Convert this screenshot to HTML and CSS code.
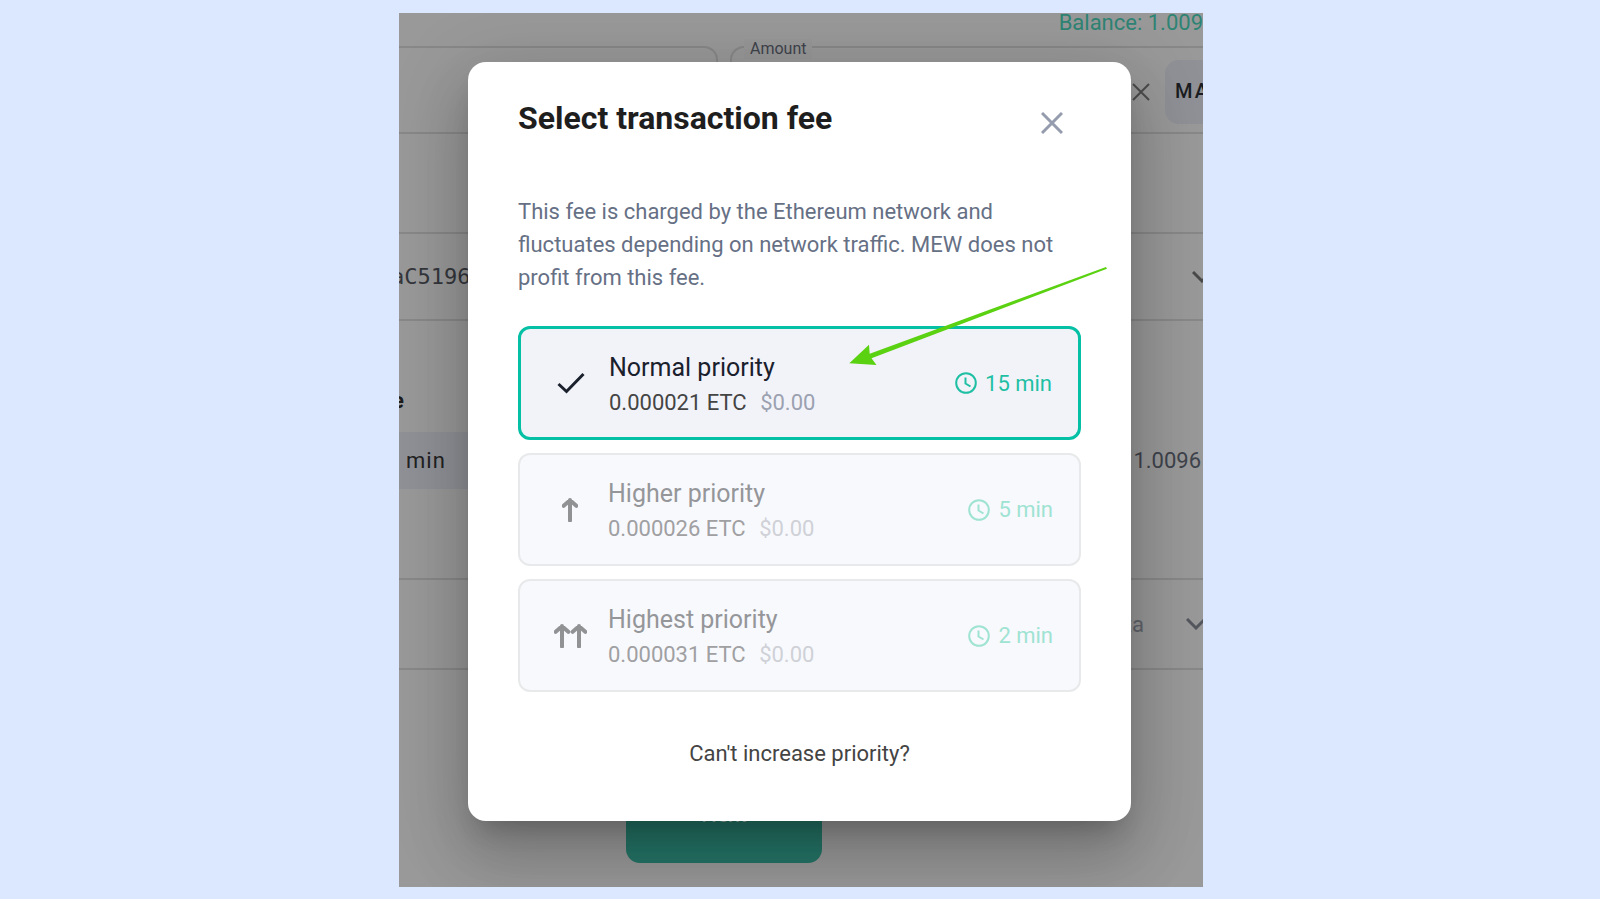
FILE: index.html
```html
<!DOCTYPE html>
<html lang="en">
<head>
<meta charset="utf-8">
<title>Select transaction fee</title>
<link rel="stylesheet" href="styles.css">
</head>
<body>
<main class="frame">
  <div class="page">
    <p class="balance">Balance: 1.009</p>
    <div class="fields">
      <div class="token"></div>
      <fieldset class="amount">
        <legend class="amount-label">Amount</legend>
        <button class="clear" type="button" aria-label="Clear amount">
          <svg class="icon-clear" viewBox="0 0 20 20"><path d="M2 2 18 18M18 2 2 18"/></svg>
        </button>
        <button class="max" type="button">MA</button>
      </fieldset>
    </div>
    <div class="row address">
      <span class="hash">aC5196</span>
      <svg class="chevron chevron-dark" viewBox="0 0 20 12"><path d="M1 1 10 10 19 1"/></svg>
    </div>
    <section class="fee">
      <h2 class="fee-title">e</h2>
      <div class="fee-row">
        <button class="fee-chip" type="button">min</button>
        <span class="fee-total">1.0096</span>
      </div>
    </section>
    <div class="row advanced">
      <span class="advanced-label">data</span>
      <svg class="chevron" viewBox="0 0 20 12"><path d="M1 1 10 10 19 1"/></svg>
    </div>
    <button class="next" type="button">Next</button>
  </div>

  <div class="modal" role="dialog" aria-labelledby="modal-title">
    <header class="modal-head">
      <h1 class="modal-title" id="modal-title">Select transaction fee</h1>
      <button class="close" type="button" aria-label="Close">
        <svg class="icon-close" viewBox="0 0 22 22"><path d="M1 1 21 21M21 1 1 21"/></svg>
      </button>
    </header>
    <p class="about">This fee is charged by the Ethereum network and fluctuates depending on network traffic. MEW does not profit from this fee.</p>
    <div class="options">
      <button class="option selected" type="button">
        <span class="mark"><svg class="icon-check" viewBox="0 0 28 22"><path d="M1.5 12 9.500 19.500 26.500 2"/></svg></span>
        <span class="detail">
          <span class="name">Normal priority</span>
          <span class="cost">0.000021 ETC <span class="usd">$0.00</span></span>
        </span>
        <span class="time"><svg class="clock" viewBox="0 0 22 22"><circle cx="11" cy="11" r="9.800"/><path d="M10.500 5.500V11.500L15.500 14.500"/></svg>15 min</span>
      </button>
      <button class="option" type="button" disabled>
        <span class="mark"><svg class="icon-up" viewBox="0 0 16 24"><path d="M8 22.500V2M1.700 7.800 8 2.200 14.300 7.800"/></svg></span>
        <span class="detail">
          <span class="name">Higher priority</span>
          <span class="cost">0.000026 ETC <span class="usd">$0.00</span></span>
        </span>
        <span class="time"><svg class="clock" viewBox="0 0 22 22"><circle cx="11" cy="11" r="9.800"/><path d="M10.500 5.500V11.500L15.500 14.500"/></svg>5 min</span>
      </button>
      <button class="option" type="button" disabled>
        <span class="mark"><svg class="icon-up2" viewBox="0 0 33 24"><path d="M8 22.500V2M1.700 7.800 8 2.200 14.300 7.800M25 22.500V2M18.700 7.800 25 2.200 31.300 7.800"/></svg></span>
        <span class="detail">
          <span class="name">Highest priority</span>
          <span class="cost">0.000031 ETC <span class="usd">$0.00</span></span>
        </span>
        <span class="time"><svg class="clock" viewBox="0 0 22 22"><circle cx="11" cy="11" r="9.800"/><path d="M10.500 5.500V11.500L15.500 14.500"/></svg>2 min</span>
      </button>
    </div>
    <a class="help" href="#">Can't increase priority?</a>
    <svg class="pointer" viewBox="0 0 260 100"><path d="M.3 97.300 20 78.700 20.700 87.800 257 1 258 2.700 22.500 92.300 27.500 99Z"/></svg>
  </div>
</main>
</body>
</html>
```

FILE: styles.css
```css
* { box-sizing: border-box; }

body {
  margin: 0;
  padding: 13px 12px 12px 14px;
  min-height: 100vh;
  display: flex;
  justify-content: center;
  align-items: flex-start;
  background: #dbe8ff;
  font-family: Roboto, "Liberation Sans", sans-serif;
  font-size: 22px;
  line-height: 33px;
}

h1, h2, p { margin: 0; }
button { font: inherit; border: 0; padding: 0; background: none; cursor: pointer; }
svg { fill: none; display: block; flex: none; }

.frame {
  display: grid;
  width: 100%;
  max-width: 804px;
  background: #999;
  overflow: hidden;
}
.page, .modal { grid-area: 1 / 1; min-width: 0; }

/* page behind the dialog */
.page { display: flex; flex-direction: column; overflow: hidden; color: #3f434c; }
.balance { height: 33px; line-height: 20px; text-align: right; color: #2e8474; white-space: nowrap; }
.fields { display: grid; grid-template-columns: 319px 1fr; gap: 12px; height: 88px; }
.token { border: 2px solid #888; border-left: 0; border-radius: 0 14px 14px 0; }
.amount {
  position: relative;
  margin: 0 -36px 0 0;
  padding: 3px 0 0;
  border: 2px solid #888;
  border-right: 0;
  border-radius: 14px 0 0 14px;
  display: flex;
  justify-content: flex-end;
  align-items: center;
  gap: 14px;
}
.amount-label {
  position: absolute;
  top: -9px;
  left: 12px;
  padding: 0 6px;
  background: #979797;
  font-size: 16px;
  line-height: 20px;
}
.clear { width: 20px; }
.icon-clear { width: 20px; height: 20px; stroke: #4c4c4c; stroke-width: 2; }
.max {
  width: 74px;
  height: 64px;
  padding-left: 10px;
  text-align: left;
  border-radius: 14px;
  background: #8f9197;
  color: #1b1d22;
  font-size: 20px;
  font-weight: 500;
  letter-spacing: 2px;
}
.row {
  display: flex;
  justify-content: space-between;
  align-items: center;
  border: solid #888;
  border-width: 2px 0;
}
.address { height: 89px; margin-top: 98px; }
.hash { margin-left: -8px; font-family: "DejaVu Sans Mono", monospace; color: #34363c; }
.chevron { width: 20px; height: 12px; stroke: #54575e; stroke-width: 3; margin-right: -3px; }
.chevron-dark { stroke: #4a4a4a; margin-right: -9px; }
.fee { height: 257px; padding-top: 64px; }
.fee-title { margin-left: -7px; font-size: 22px; line-height: 32px; color: #1c1c1c; }
.fee-row { display: flex; justify-content: space-between; align-items: center; margin-top: 15px; }
.fee-chip {
  width: 120px;
  height: 57px;
  padding-left: 7px;
  text-align: left;
  background: #8f9197;
  color: #222;
  letter-spacing: 1px;
}
.fee-total { margin-right: 2px; }
.advanced { height: 92px; }
.advanced-label { margin-left: auto; margin-right: 42px; color: #62656c; }
.next {
  width: 196px;
  height: 98px;
  margin: 95px 0 0 227px;
  border-radius: 14px;
  background: #257567;
  color: #8fb0aa;
}

/* dialog */
.modal {
  position: relative;
  margin: 49px 72px 66px 69px;
  padding: 38px 50px 51px;
  display: flex;
  flex-direction: column;
  border-radius: 18px;
  background: #fff;
  box-shadow: 0 18px 24px -11px rgba(0, 0, 0, .2), 0 38px 60px 5px rgba(0, 0, 0, .14), 0 14px 73px 13px rgba(0, 0, 0, .12);
}
.modal-head { display: flex; justify-content: space-between; align-items: center; }
.modal-title { font-size: 32px; line-height: 36px; font-weight: 700; color: #1e1e1e; }
.close { margin: 9px 18px 0 0; }
.icon-close { width: 22px; height: 22px; stroke: #949cae; stroke-width: 3; }
.about { margin-top: 59px; color: #667085; }
.options { display: flex; flex-direction: column; gap: 13px; margin-top: 32px; }
.option {
  display: flex;
  align-items: center;
  height: 113px;
  padding: 0 26px;
  border: 2px solid #e8e9ea;
  border-radius: 12px;
  background: #f8f9fd;
  text-align: left;
  color: #959699;
}
.option.selected { height: 114px; border: 3px solid #05c0a5; background: #f2f3f9; color: #1a202c; }
.mark { width: 48px; display: flex; justify-content: center; flex: none; }
.mark svg { stroke: #919294; stroke-linecap: round; stroke-linejoin: round; stroke-width: 4; }
.mark .icon-check { width: 28px; height: 22px; stroke: #1a202c; stroke-width: 3; stroke-linecap: butt; stroke-linejoin: miter; }
.icon-up { width: 16px; height: 24px; }
.icon-up2 { width: 33px; height: 24px; }
.detail { display: flex; flex-direction: column; flex: 1; margin-left: 14px; padding-top: 3px; line-height: 35px; }
.name { font-size: 25px; }
.cost { color: #a0a0a2; }
.usd { margin-left: 8px; color: #cfd1d7; }
.selected .cost { color: #444; }
.selected .usd { color: #9ba1b0; }
.time { display: flex; align-items: center; gap: 8px; color: #9fe3d3; }
.selected .time { color: #1fbfa4; }
.clock { width: 22px; height: 22px; stroke: currentColor; stroke-width: 2; }
.help { align-self: center; margin-top: 45px; color: #444; text-decoration: none; }
.pointer { position: absolute; top: 204px; left: 381px; width: 260px; height: 100px; fill: #5ad111; pointer-events: none; }
```
